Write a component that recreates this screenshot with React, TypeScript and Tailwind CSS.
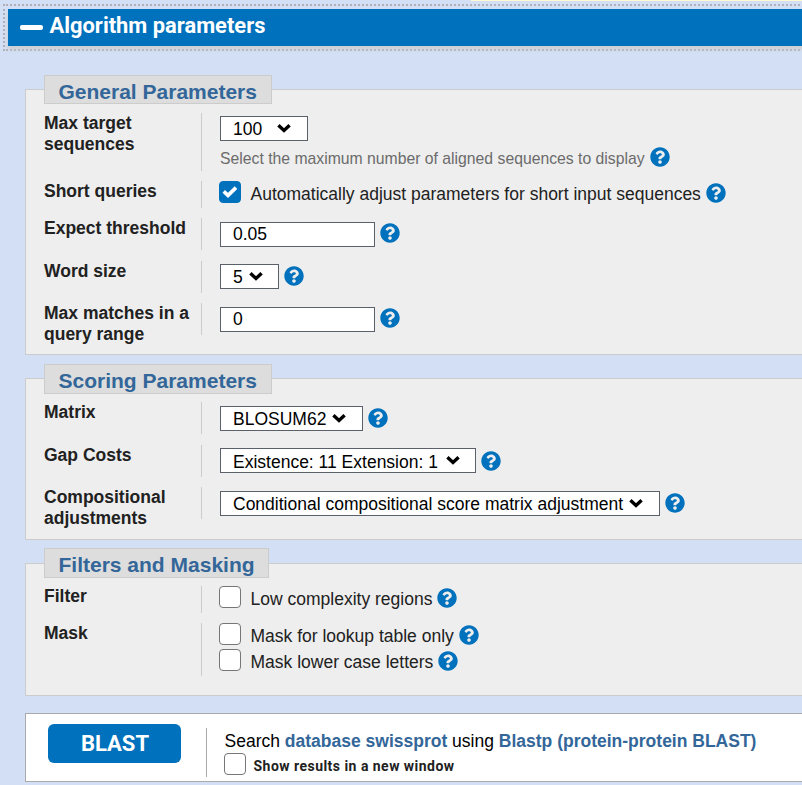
import type { ReactNode } from "react";
import { FaQuestionCircle } from "react-icons/fa";

function Help({ className = "" }: { className?: string }) {
  return <FaQuestionCircle size={20} className={`shrink-0 text-[#0071bc] ${className}`} />;
}

function Chevron() {
  return (
    <svg width="14" height="9" viewBox="0 0 14 9" className="shrink-0" fill="none">
      <path d="M1.4 1.3 L7 6.5 L12.6 1.3" stroke="#000" strokeWidth="3.4" />
    </svg>
  );
}

function Checkbox({ checked = false }: { checked?: boolean }) {
  return (
    <span
      className={`ml-[-1px] mt-[-0.5px] flex h-[22px] w-[22px] shrink-0 items-center justify-center rounded-[4px] border ${
        checked ? "border-[#0071bc] bg-[#0071bc]" : "border-[#767676] bg-white"
      }`}
    >
      {checked && (
        <svg width="16" height="14" viewBox="0 0 16 14" fill="none">
          <path d="M1.7 6.4 L6 10.4 L14 2.6" stroke="#fff" strokeWidth="3.6" />
        </svg>
      )}
    </span>
  );
}

function Select({
  value,
  className,
  gap = "gap-[6px]",
  shift = "",
}: {
  value: string;
  className: string;
  gap?: string;
  shift?: string;
}) {
  return (
    <div className={`flex h-[25px] shrink-0 items-center border border-[#5b616b] bg-white pl-3 text-black ${gap} ${className}`}>
      <span className={`leading-[21px] ${shift}`}>{value}</span>
      <Chevron />
    </div>
  );
}

function Input({ value }: { value: string }) {
  return (
    <div className="flex h-[25px] w-[155px] shrink-0 items-center border border-[#5b616b] bg-white pl-3 text-black">
      <span className="leading-[21px]">{value}</span>
    </div>
  );
}

function Row({ label, className, children }: { label: ReactNode; className: string; children: ReactNode }) {
  return (
    <div className={`flex ${className}`}>
      <div className="w-[157px] shrink-0 font-bold leading-[21px]">{label}</div>
      <div className="shrink-0 border-l border-[#ccc] pl-[18px]">{children}</div>
    </div>
  );
}

function Field({ children, className = "pt-1" }: { children: ReactNode; className?: string }) {
  return <div className={`flex items-start gap-[5px] ${className}`}>{children}</div>;
}

function Group({
  title,
  legend,
  className,
  children,
}: {
  title: string;
  legend: string;
  className: string;
  children: ReactNode;
}) {
  return (
    <section className={`ml-[25px] w-[790px] border border-[#ccc] bg-[#eee] pl-[18px] ${className}`}>
      <h2 className={`flex items-center border border-[#ccc] bg-[#ddd] pl-[13.5px] text-[21px] font-bold text-[#336699] ${legend}`}>
        {title}
      </h2>
      {children}
    </section>
  );
}

export default function App() {
  return (
    <main className="h-[785px] w-[802px] overflow-hidden bg-[#d3dff5] font-['Liberation_Sans',Arial,sans-serif] text-[17.5px] text-[#212121]">
      <div className="ml-[471px] h-px bg-[#fff9cf]" />
      <div className="ml-[3px] mt-[3px] h-[47px] w-[820px] border-2 border-dotted border-[#aeb0b5] pl-[3px] pt-[3px]">
        <header className="flex h-[37px] items-center bg-[#0071bc] pl-3 font-[Roboto] text-white shadow-[0_3px_4px_#ccc]">
          <span className="mt-[-1px] h-[5px] w-[23px] rounded-[2px] bg-white" />
          <h1 className="ml-[6.5px] mt-[-4px] text-[21.9px] font-bold leading-[26px]">Algorithm parameters</h1>
        </header>
      </div>

      <Group title="General Parameters" legend="mt-[-15px] h-[29px] w-[228px] pt-[4px]" className="mt-[38px] h-[266px]">
        <Row label={<>Max target<br />sequences</>} className="mt-[9px] h-[58px]">
          <Field className="pt-[3px]">
            <Select value="100" className="w-[88px]" gap="gap-[15px]" shift="mt-[2px]" />
          </Field>
          <Field className="pt-[5px]">
            <span className="mt-[3px] text-[15.75px] leading-[19px] text-[#6b6b6b]">
              Select the maximum number of aligned sequences to display
            </span>
            <Help className="mt-[0.5px]" />
          </Field>
        </Row>
        <Row label="Short queries" className="mt-[10px] h-[27px]">
          <Field className="">
            <Checkbox checked />
            <span className="ml-[4.5px] mt-[3px] leading-[21px]">Automatically adjust parameters for short input sequences</span>
            <Help className="mt-[1.5px]" />
          </Field>
        </Row>
        <Row label="Expect threshold" className="mt-[10px] h-8">
          <Field>
            <Input value="0.05" />
            <Help className="mt-[0.5px]" />
          </Field>
        </Row>
        <Row label="Word size" className="mt-[11px] h-8">
          <Field className="pt-[3px]">
            <Select value="5" className="w-[59px]" shift="mt-[2px]" />
            <Help className="mt-[1.5px]" />
          </Field>
        </Row>
        <Row label={<>Max matches in a<br />query range</>} className="mt-[10px] h-8">
          <Field>
            <Input value="0" />
            <Help className="mt-[0.5px]" />
          </Field>
        </Row>
      </Group>

      <Group title="Scoring Parameters" legend="mt-[-15px] h-[30px] w-[228px] pt-[3px]" className="mt-[23px] h-[162px]">
        <Row label="Matrix" className="mt-2 h-8">
          <Field>
            <Select value="BLOSUM62" className="w-[143px]" shift="mt-[1px]" />
            <Help className="mt-[1.5px]" />
          </Field>
        </Row>
        <Row label="Gap Costs" className="mt-[11px] h-8">
          <Field className="pt-[3px]">
            <Select value="Existence: 11 Extension: 1" className="w-[256px]" gap="gap-2" shift="mt-[3px]" />
            <Help className="mt-[2.5px]" />
          </Field>
        </Row>
        <Row label={<>Compositional<br />adjustments</>} className="mt-[10px] h-8">
          <Field>
            <Select value="Conditional compositional score matrix adjustment" className="w-[440px]" shift="mt-[1px]" />
            <Help className="mt-[1.5px]" />
          </Field>
        </Row>
      </Group>

      <Group title="Filters and Masking" legend="mt-[-16px] h-[30px] w-[225px] pt-[3px]" className="mt-[23px] h-[133px]">
        <Row label="Filter" className="mt-2 h-[27px]">
          <Field className="">
            <Checkbox />
            <span className="ml-[4.5px] mt-[3px] leading-[21px]">Low complexity regions</span>
            <Help className="mt-[1.5px]" />
          </Field>
        </Row>
        <Row label="Mask" className="mt-[10px] h-[53px]">
          <Field className="h-[26px]">
            <Checkbox />
            <span className="ml-[4.5px] mt-[3px] leading-[21px]">Mask for lookup table only</span>
            <Help className="mt-[1.5px]" />
          </Field>
          <Field className="">
            <Checkbox />
            <span className="ml-[4.5px] mt-[3px] leading-[21px]">Mask lower case letters</span>
            <Help className="mt-[1.5px]" />
          </Field>
        </Row>
      </Group>

      <section className="ml-[25px] mt-[17px] flex h-[69px] w-[790px] border border-[#aaa] bg-white pl-[22px]">
        <button className="mt-[10px] flex h-[39px] w-[133px] items-center justify-center rounded-[6px] bg-[#0071bc] pl-px font-[Roboto] text-[22px] font-bold text-white">
          BLAST
        </button>
        <div className="ml-[25px] mt-[14px] h-[49px] border-l border-[#aaa] pl-[17.5px]">
          <p className="mt-[3px] leading-[21px] text-black">
            Search <b className="text-[#336699]">database swissprot</b> using{" "}
            <b className="text-[#336699]">Blastp (protein-protein BLAST)</b>
          </p>
          <div className="mt-[1px] flex items-start gap-2">
            <Checkbox />
            <span className="mt-[4px] font-[Roboto] text-[14px] font-bold leading-[18px] tracking-[0.47px]">Show results in a new window</span>
          </div>
        </div>
      </section>
    </main>
  );
}
